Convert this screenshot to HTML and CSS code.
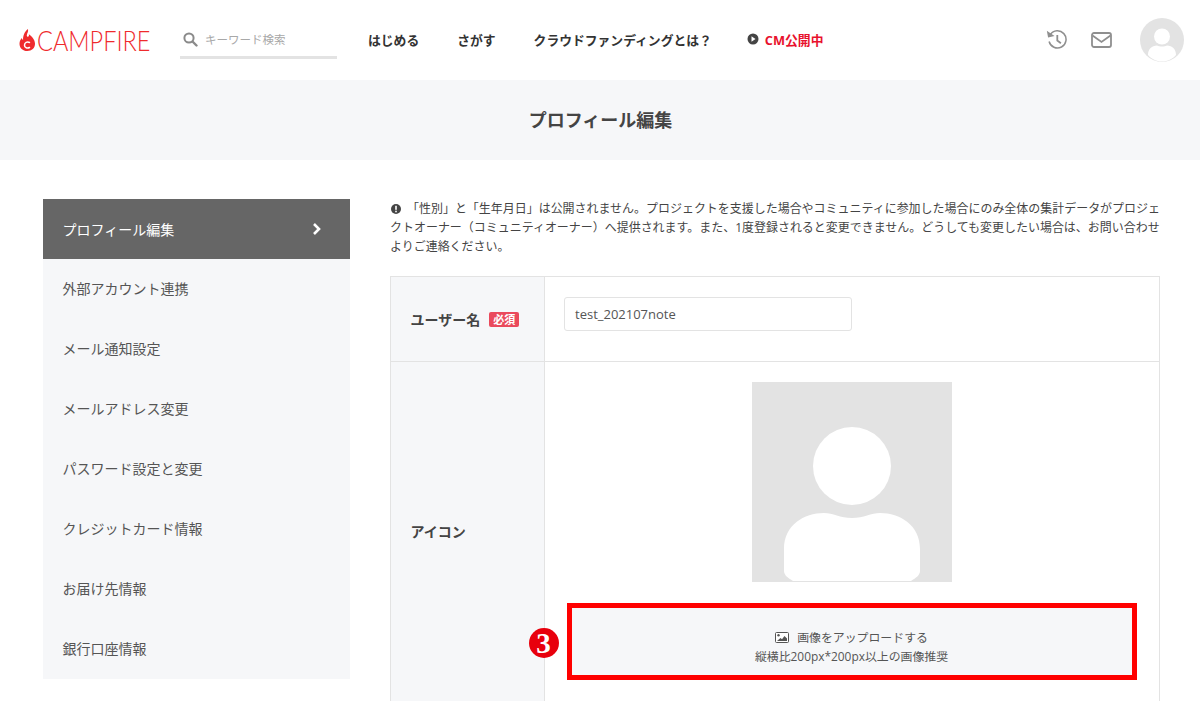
FILE: index.html
```html
<!DOCTYPE html>
<html lang="ja">
<head>
  <meta charset="UTF-8" />
  <meta name="viewport" content="width=device-width, initial-scale=1.0"/>
  <title>プロフィール編集 - CAMPFIRE</title>
  <link rel="stylesheet" href="styles.css">
</head>
<body>
  <header class="site-header">
    <a class="logo">
      <svg class="logo-flame" width="17" height="22" viewBox="0 0 17 22">
        <path fill="#ef2b2d" d="M9 0c.6 3-1 4.300-1.200 6.200-.1 1 .6 1.700 1.300 1.500.9-.2 1-1.300.7-2.400 3 2 6.200 5.300 6.200 9.500C16 19 12.800 22 8.300 22 3.700 22 .5 19 .5 14.700c0-2.400 1-4.300 2.300-5.700.2 1 .6 1.700 1.300 2.100C3.800 7 5.500 2.500 9 0z"/>
        <path fill="none" stroke="#fff" stroke-width="1.500" stroke-linecap="round" d="M10.500 13.500c-2.300-1.200-5 0-5 2.700 0 2.600 3 3.600 5 2.300"/>
      </svg>
      <span class="logo-text">CAMPFIRE</span>
    </a>
    <div class="search">
      <svg width="15" height="15" viewBox="0 0 15 15">
        <circle cx="6" cy="6" r="4.600" fill="none" stroke="#8a8a8a" stroke-width="2"/>
        <path d="M9.500 9.500l4 4" stroke="#8a8a8a" stroke-width="2.400" stroke-linecap="round"/>
      </svg>
      <span class="search-text">キーワード検索</span>
    </div>
    <nav class="nav">
      <a class="nav-link">はじめる</a>
      <a class="nav-link">さがす</a>
      <a class="nav-link">クラウドファンディングとは？</a>
      <a class="nav-link nav-cm">
        <svg width="12" height="12" viewBox="0 0 12 12">
          <circle cx="6" cy="6" r="5.500" fill="#444"/>
          <path d="M4.500 3.300l4 2.700-4 2.700z" fill="#fff"/>
        </svg>
        CM公開中
      </a>
    </nav>
    <div class="header-icons">
      <svg width="21" height="20" viewBox="0 0 21 20" fill="none" stroke="#8f8f8f" stroke-width="1.500">
        <path d="M4.300 4.600A8.600 8.600 0 1 1 3.100 11.500"/>
        <path d="M.8 .8l1.300 6.800 6.400-1.700z" fill="#8f8f8f" stroke="none"/>
        <path d="M11.300 5v5.600l3.600 2.600" stroke-width="1.800"/>
      </svg>
      <svg width="21" height="16" viewBox="0 0 21 16" fill="none" stroke="#8f8f8f" stroke-width="1.800">
        <rect x="1" y="1" width="19" height="14" rx="2"/>
        <path d="M1.500 3.500l9 6.500 9-6.500"/>
      </svg>
      <div class="avatar">
        <svg width="44" height="44" viewBox="0 0 44 44">
          <circle cx="22" cy="22" r="22" fill="#e3e3e3"/>
          <circle cx="22" cy="18.500" r="8" fill="#fff"/>
          <path d="M8 37c0-6 4-9.500 9-9.500 1.500.7 3 1 5 1s3.500-.3 5-1c5 0 9 3.500 9 9.500-3.500 4-8.500 6.500-14 6.500S11.500 41 8 37z" fill="#fff"/>
        </svg>
      </div>
    </div>
  </header>

  <div class="page-title">
    <h1>プロフィール編集</h1>
  </div>

  <div class="container">
    <ul class="side-menu">
      <li class="side-item active">プロフィール編集
        <svg width="10" height="14" viewBox="0 0 10 14"><path d="M2 2l5 5-5 5" fill="none" stroke="#fff" stroke-width="2.600"/></svg>
      </li>
      <li class="side-item">外部アカウント連携</li>
      <li class="side-item">メール通知設定</li>
      <li class="side-item">メールアドレス変更</li>
      <li class="side-item">パスワード設定と変更</li>
      <li class="side-item">クレジットカード情報</li>
      <li class="side-item">お届け先情報</li>
      <li class="side-item">銀行口座情報</li>
    </ul>

    <div class="content">
      <p class="notice">
        <svg width="12" height="12" viewBox="0 0 12 12">
          <circle cx="6" cy="6" r="5" fill="#444"/>
          <rect x="5.200" y="2.800" width="1.600" height="4" fill="#fff"/>
          <rect x="5.200" y="7.700" width="1.600" height="1.600" fill="#fff"/>
        </svg>「性別」と「生年月日」は公開されません。プロジェクトを支援した場合やコミュニティに参加した場合にのみ全体の集計データがプロジェ<br>クトオーナー（コミュニティオーナー）へ提供されます。また、1度登録されると変更できません。どうしても変更したい場合は、お問い合わせ<br>よりご連絡ください。
      </p>

      <div class="form-table">
        <div class="form-row row-name">
          <div class="form-label">ユーザー名<span class="required">必須</span></div>
          <div class="form-field">
            <div class="text-input">test_202107note</div>
          </div>
        </div>
        <div class="form-row row-icon">
          <div class="form-label">アイコン</div>
          <div class="form-field field-icon">
            <svg class="icon-preview" width="200" height="200" viewBox="0 0 200 200">
              <rect width="200" height="200" fill="#e3e3e3"/>
              <circle cx="100" cy="84" r="39" fill="#fff"/>
              <path d="M32 199v-32c0-24 20-36 40-36 9 0 16 5 28 5s19-5 28-5c20 0 40 12 40 36v22c0 4-4 7-9 10H41c-5-3-9-6-9-10z" fill="#fff"/>
            </svg>
            <div class="upload-wrap">
              <div class="annotation">3</div>
              <div class="upload-box">
                <div class="upload-line">
                  <svg width="14" height="11" viewBox="0 0 14 11">
                    <rect x=".5" y=".5" width="13" height="10" rx="1" fill="#fff" stroke="#555"/>
                    <circle cx="3.500" cy="3.300" r="1.200" fill="#555"/>
                    <path d="M2 9l3.500-3 1.500 1.200L9.500 4 12 6.500V9z" fill="#555"/>
                  </svg>
                  画像をアップロードする
                </div>
                <div class="upload-line">縦横比200px*200px以上の画像推奨</div>
              </div>
            </div>
          </div>
        </div>
      </div>
    </div>
  </div>
</body>
</html>
```

FILE: styles.css
```css
html, body {
  margin: 0;
  height: 701px;
  overflow: hidden;
}

body {
  font-family: "Open Sans", "Noto Sans CJK JP", sans-serif;
  color: #444;
  background-color: #fff;
}

.site-header {
  height: 80px;
  display: flex;
  align-items: center;
  padding: 0 16px 0 19px;
}

.logo {
  width: 161px;
  display: flex;
  align-items: center;
  gap: 1px;
}

.logo-flame {
  flex: none;
}

.logo-text {
  font-family: "Lato", sans-serif;
  font-weight: 300;
  font-size: 27px;
  color: #ef2b2d;
  line-height: 1;
  transform: scaleX(.87);
  transform-origin: left center;
}

.search {
  width: 157px;
  height: 37px;
  margin-top: 1px;
  display: flex;
  align-items: center;
  gap: 7px;
  padding-left: 3px;
  box-sizing: border-box;
  border-bottom: 3px solid #e3e3e3;
}

.search-text {
  font-size: 11.500px;
  color: #a8a8a8;
}

.nav {
  display: flex;
  align-items: center;
  gap: 38px;
  margin-left: 31px;
  padding-bottom: 2px;
  flex: 1;
}

.nav-link {
  font-size: 12.800px;
  font-weight: 700;
  color: #333;
  display: flex;
  align-items: center;
  gap: 6px;
}

.nav-cm {
  color: #e8112d;
  margin-left: -3px;
}

.header-icons {
  display: flex;
  align-items: center;
  gap: 24px;
}

.avatar {
  margin-left: 4px;
  height: 44px;
}

.page-title {
  height: 80px;
  padding: 0 0 3px 1px;
  box-sizing: border-box;
  background-color: #f6f7f9;
  display: flex;
  align-items: center;
  justify-content: center;
}

.page-title h1 {
  margin: 0;
  font-size: 18px;
  font-weight: 700;
  color: #444;
}

.container {
  display: flex;
  gap: 40px;
  padding: 39px 40px 0 43px;
}

.side-menu {
  width: 307px;
  flex: none;
  margin: 0;
  padding: 0;
  list-style: none;
  background-color: #f6f7f9;
  align-self: flex-start;
}

.side-item {
  height: 60px;
  box-sizing: border-box;
  padding: 0 28px 1.500px 19.500px;
  display: flex;
  align-items: center;
  justify-content: space-between;
  font-size: 14px;
  color: #555;
}

.side-item.active {
  padding-bottom: 1px;
  background-color: #666;
  color: #fff;
}

.content {
  flex: 1;
  min-width: 0;
}

.notice {
  margin: 0 0 20px;
  font-size: 11.970px;
  line-height: 19px;
  white-space: nowrap;
  color: #444;
}

.notice svg {
  vertical-align: -2px;
  margin-right: 5px;
}

.form-table {
  border: 1px solid #e3e3e3;
  border-bottom: 0;
}

.form-row {
  display: flex;
}

.row-name {
  height: 84px;
  border-bottom: 1px solid #e3e3e3;
}

.row-icon {
  height: 339px;
}

.form-label {
  width: 133.500px;
  flex: none;
  padding-left: 19.500px;
  display: flex;
  align-items: center;
  gap: 9px;
  font-size: 14px;
  font-weight: 700;
  color: #444;
  background-color: #f6f7f9;
  border-right: 1px solid #e3e3e3;
}

.row-icon .form-label {
  padding-bottom: 1px;
}

.required {
  font-size: 11px;
  line-height: 15px;
  padding: 0 4px;
  border-radius: 2px;
  color: #fff;
  background-color: #ea4a5c;
}

.form-field {
  flex: 1;
  padding: 20px;
}

.text-input {
  width: 276px;
  height: 32px;
  margin-left: -1px;
  padding-left: 10px;
  border: 1px solid #e3e3e3;
  border-radius: 3px;
  font-size: 13px;
  line-height: 32px;
  color: #555;
}

.field-icon {
  display: flex;
  flex-direction: column;
  align-items: center;
}

.icon-preview {
  flex: none;
}

.upload-wrap {
  position: relative;
  margin: 21px 1px 0 0;
}

.upload-box {
  width: 560px;
  height: 67px;
  border: 5px solid #f00;
  background-color: #f6f7f9;
  display: flex;
  flex-direction: column;
  align-items: center;
  justify-content: center;
}

.upload-line {
  font-size: 11.900px;
  line-height: 19px;
  color: #555;
  position: relative;
  top: 5px;
}

.upload-line svg {
  vertical-align: -1px;
  margin-right: 5px;
}

.annotation {
  position: absolute;
  left: -38px;
  top: 25px;
  width: 30px;
  height: 30px;
  border-radius: 50%;
  background-color: #e8000d;
  color: #fff;
  font-family: "Liberation Serif", serif;
  font-weight: 700;
  font-size: 29px;
  line-height: 30px;
  text-align: center;
}
```
